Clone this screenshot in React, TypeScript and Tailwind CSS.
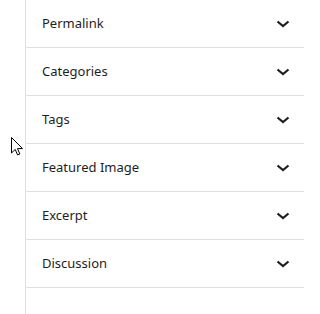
import { ReactNode } from "react"

const panels = ["Permalink", "Categories", "Tags", "Featured Image", "Excerpt", "Discussion"]

function Chevron() {
  return (
    <svg width="14" height="8" viewBox="0 0 14 8" fill="none" className="shrink-0">
      <path d="M1.5 1.5L7 6L12.5 1.5" stroke="#1e1e1e" strokeWidth="2.2" />
    </svg>
  )
}

function PanelRow({ children }: { children: ReactNode }) {
  return (
    <div className="flex h-[48px] items-center justify-between border-b border-[#e0e0e0] pl-4 pr-[14px]">
      <span className="text-[13px] text-[#1e1e1e]">{children}</span>
      <Chevron />
    </div>
  )
}

export default function App() {
  return (
    <div
      className="relative flex h-[314px] w-[304px] overflow-hidden bg-white"
      style={{ fontFamily: '"Noto Sans", "Open Sans", sans-serif' }}
    >
      {/* Left strip of the editor canvas */}
      <div className="w-[26px] shrink-0 border-r border-[#e0e0e0]" />

      {/* Sidebar panels */}
      <div className="flex-1">
        {panels.map((p) => (
          <PanelRow key={p}>{p}</PanelRow>
        ))}
      </div>

      {/* Mouse pointer */}
      <svg className="absolute left-[11px] top-[137px]" width="12" height="19" viewBox="0 0 12 19">
        <path
          d="M0.5 0.5V16L4.2 12.4L6.6 18L8.8 17L6.5 11.6H11.5Z"
          fill="white"
          stroke="black"
          strokeWidth="1"
          strokeLinejoin="round"
        />
      </svg>
    </div>
  )
}
